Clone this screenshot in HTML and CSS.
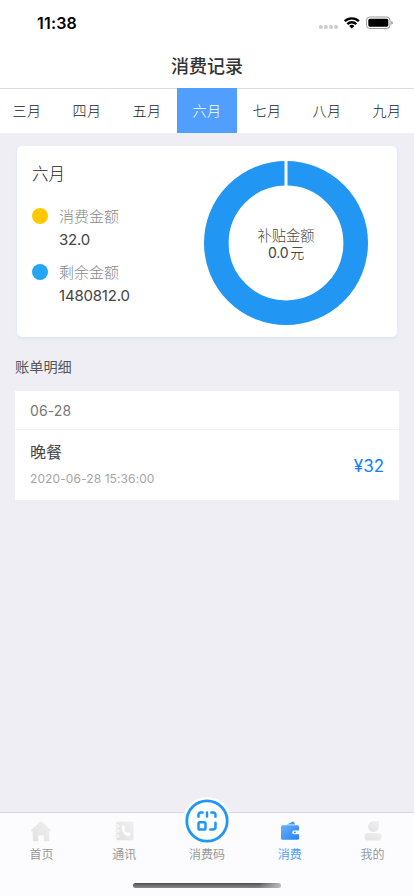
FILE: index.html
```html
<!DOCTYPE html>
<html lang="zh-CN">
<head>
<meta charset="utf-8">
<meta name="viewport" content="width=device-width, initial-scale=1">
<title>消费记录</title>
<link rel="stylesheet" href="styles.css">
</head>
<body>
<div class="app">
  <div class="status">
    <span class="time">11:38</span>
    <svg class="status-icons" width="76" height="16" viewBox="0 0 76 16">
      <g fill="#cbcbcb"><circle cx="2.8" cy="12" r="2"/><circle cx="7.9" cy="12" r="2"/><circle cx="13" cy="12" r="2"/><circle cx="18.1" cy="12" r="2"/></g>
      <g fill="none" stroke="#000" stroke-width="2.3"><path d="M26.700 6.200a10.200 10.200 0 0 1 14.200 0"/><path d="M29.300 9.100a6.400 6.400 0 0 1 9 0"/></g>
      <path d="M31.200 11.100a3.700 3.700 0 0 1 5.200 0L33.800 13.500z"/>
      <rect x="48.500" y="2" width="23.500" height="11.500" rx="3.300" fill="#fff" stroke="#999"/>
      <rect x="50.300" y="3.800" width="20" height="8" rx="1.700"/>
      <path d="M73.300 6c2 .600 2 3.200 0 3.800z" fill="#888"/>
    </svg>
  </div>
  <header class="title">消费记录</header>
  <nav class="months">
    <span>三月</span><span>四月</span><span>五月</span><span class="on">六月</span><span>七月</span><span>八月</span><span>九月</span>
  </nav>
  <main>
    <section class="card">
      <div class="summary">
        <h2>六月</h2>
        <div class="legend"><i class="dot yellow"></i><span>消费金额</span></div>
        <p class="amount">32.0</p>
        <div class="legend"><i class="dot blue"></i><span>剩余金额</span></div>
        <p class="amount">1480812.0</p>
      </div>
      <div class="chart">
        <svg width="164" height="164" viewBox="0 0 164 164">
          <circle cx="82" cy="82" r="69.700" fill="none" stroke="#2196f3" stroke-width="24.600"/>
          <path d="M82 0v26" stroke="#fff" stroke-width="3"/>
        </svg>
        <div class="center"><span>补贴金额</span><b>0.0<em>元</em></b></div>
      </div>
    </section>
    <h3>账单明细</h3>
    <section class="list">
      <div class="day">06-28</div>
      <div class="row">
        <div><div class="meal">晚餐</div><div class="date">2020-06-28 15:36:00</div></div>
        <div class="price">¥32</div>
      </div>
    </section>
  </main>
  <footer>
    <div class="tabs">
      <div class="tab">
        <svg width="24" height="24" viewBox="0 0 24 24"><defs><linearGradient id="g" x1="1" y1="0" x2="0" y2="1"><stop offset="0" stop-color="#f0f0f0"/><stop offset="1" stop-color="#e1e1e1"/></linearGradient></defs><path fill="url(#g)" d="M12 2.300q.500 0 1 .500l8.800 8.200q.700 1.200-.400 1.300H20.300v9.200q0 .800-.800.800H14.900v-5.800H9.300v5.800H4.600q-.800 0-.8-.800v-9.200H2.600q-1.100-.100-.400-1.300L11 2.800q.500-.500 1-.500z"/></svg>
        <span>首页</span>
      </div>
      <div class="tab">
        <svg width="24" height="24" viewBox="0 0 24 24"><rect x="4.300" y="2.500" width="17.200" height="18.800" rx="2" fill="url(#g)"/><g stroke="#fcfcfe" stroke-width="3" stroke-linecap="round"><path d="M3.500 7H6M3.500 12H6M3.500 17H6"/></g><g stroke="#e5e5e5" stroke-width="1.200" stroke-linecap="round"><path d="M3.300 7H6M3.300 12H6M3.300 17H6"/></g><path d="M10.300 6.800l1.600-.400 1.500 3-1.200 1.300c.500 1.500 1.300 2.300 2.600 3.100l1.400-1 2.500 2-.7 1.700c-1.100 1-3.500.500-5.300-1.300-2.400-2.400-3.900-6.500-2.400-8.400z" fill="#fff"/></svg>
        <span>通讯</span>
      </div>
      <div class="tab code">
        <div class="disc"><svg width="48" height="48" viewBox="0 0 48 48"><circle cx="24" cy="24" r="24" fill="#fff"/><circle cx="24" cy="24" r="20.200" fill="none" stroke="#2196f9" stroke-width="2.800"/><g fill="none" stroke="#2196f9" stroke-width="2.500" stroke-linecap="round" stroke-linejoin="round"><path d="M15.500 19.700v-2q0-2.300 2.300-2.300h1.900M24 15.400v4.200M28.300 15.400H30q2.500 0 2.500 2.300v2M32.500 25.800v4.200q0 2.500-2.500 2.500h-2.700"/><rect x="15.500" y="25.300" width="7" height="7.200" rx="1.300"/></g></svg></div>
        <span>消费码</span>
      </div>
      <div class="tab active">
        <svg width="24" height="24" viewBox="0 0 24 24"><defs><linearGradient id="w" x1="0" y1="0" x2="1" y2="1"><stop stop-color="#68b0ff"/><stop offset="1" stop-color="#2383f3"/></linearGradient></defs><path d="M8.500 5.600Q12 4.300 14.300 2.800q1.200-.600 1.700.400l1.200 2.400z" fill="#3f98fb"/><rect x="3" y="6.300" width="18" height="14.400" rx="1.500" fill="url(#w)"/><path d="M21.500 11.500H16.200a1.900 1.900 0 0 0 0 3.800h5.300z" fill="#fff"/><circle cx="16.900" cy="13.400" r=".9" fill="#318bf4"/></svg>
        <span>消费</span>
      </div>
      <div class="tab">
        <svg width="24" height="24" viewBox="0 0 24 24"><path d="M12.300 2.300h4.700q.900 0 .9.900v4.500a5.400 5.400 0 1 1-5.600-5.400z" fill="url(#g)"/><rect x="3.500" y="14" width="17.200" height="7.500" rx="3.700" fill="url(#g)"/></svg>
        <span>我的</span>
      </div>
    </div>
    <div class="home-bar"></div>
  </footer>
</div>
</body>
</html>
```
FILE: styles.css
```css
* { box-sizing: border-box; margin: 0; padding: 0; }
body { font-family: Inter, "Noto Sans CJK SC", sans-serif; color: #444; }
.app { width: 414px; height: 896px; display: flex; flex-direction: column; overflow: hidden; background: #efeef4; }
.status { height: 44px; background: #fff; display: flex; justify-content: space-between; padding: 15px 20px 0 37px; }
.time { font-size: 16px; line-height: 17px; font-weight: 600; letter-spacing: .2px; color: #000; }
.title { height: 44px; background: #fff; text-align: center; font-size: 18px; line-height: 46px; font-weight: 500; color: #333; }
.months { height: 45px; border-top: 1px solid #dedee0; margin-left: -3px; width: 420px; display: flex; background: #fff; font-size: 14px; font-weight: 300; letter-spacing: .5px; color: #222; }
.months span { width: 60px; height: 44px; line-height: 44px; text-align: center; }
.months .on { margin-top: -1px; height: 45px; line-height: 46px; background: #509fff; color: #fff; }
main { flex: 1; padding: 13px 15px 0; }
.card { margin: 0 2px; height: 191px; border-radius: 5px; background: #fff; box-shadow: 0 1px 3px #d4e5f4; display: flex; justify-content: space-between; padding: 15px 29px 0 15px; }
.summary h2 { font-size: 16.5px; line-height: 26px; font-weight: 300; color: #222; margin-bottom: 17px; }
.legend { display: flex; align-items: center; height: 24px; gap: 11px; font-size: 15px; font-weight: 300; line-height: 22px; color: #888; }
.legend span { margin-top: 2px; }
.dot { width: 16px; height: 16px; border-radius: 50%; }
.yellow { background: #ffc800; }
.blue { background: #23a7f5; }
.amount { font-size: 15px; line-height: 22px; letter-spacing: -.2px; margin: 1px 0 9px 27px; }
.chart { width: 164px; height: 164px; display: grid; }
.chart > * { grid-area: 1 / 1; }
.center { align-self: center; padding-top: 1px; display: flex; flex-direction: column; align-items: center; font-size: 14.3px; line-height: 17px; font-weight: 300; color: #444; }
.center b { font-size: 14px; font-weight: 400; letter-spacing: -.2px; color: #444; }
.center em { font-style: normal; font-weight: 300; color: #222; margin-left: 2px; }
h3 { font-size: 14.2px; line-height: 20px; font-weight: 400; margin: 20px 0 13.5px; color: #555; }
.list { background: #fff; height: 109px; }
.day { height: 39px; border-bottom: 1px solid #f4f4f5; padding-left: 15px; line-height: 39px; font-size: 14px; letter-spacing: .1px; color: #777; }
.row { display: flex; justify-content: space-between; padding: 10px 15px 0; }
.meal { font-size: 16px; line-height: 24px; color: #444; }
.date { font-size: 12px; line-height: 16px; margin-top: 7px; letter-spacing: .1px; color: #a5a5a5; }
.price { font-size: 17px; line-height: 53px; color: #147efb; }
footer { height: 84px; border-top: 1px solid #d7d6dd; background: #fcfcfe; }
.tabs { display: flex; height: 70px; }
.tab { width: 20%; display: flex; flex-direction: column; align-items: center; padding-top: 6px; font-size: 12px; line-height: 18px; color: #999; }
.tab span { margin-top: 3px; }
.disc { height: 24px; display: flex; align-items: flex-end; }
.disc svg { flex: none; margin-bottom: -2px; }
.active { color: #509fff; }
.home-bar { width: 148px; height: 5px; border-radius: 3px; margin: 0 auto; background: linear-gradient(90deg, #fff0 85%, #bbb), linear-gradient(#505050, #8a8a8a); }
```
